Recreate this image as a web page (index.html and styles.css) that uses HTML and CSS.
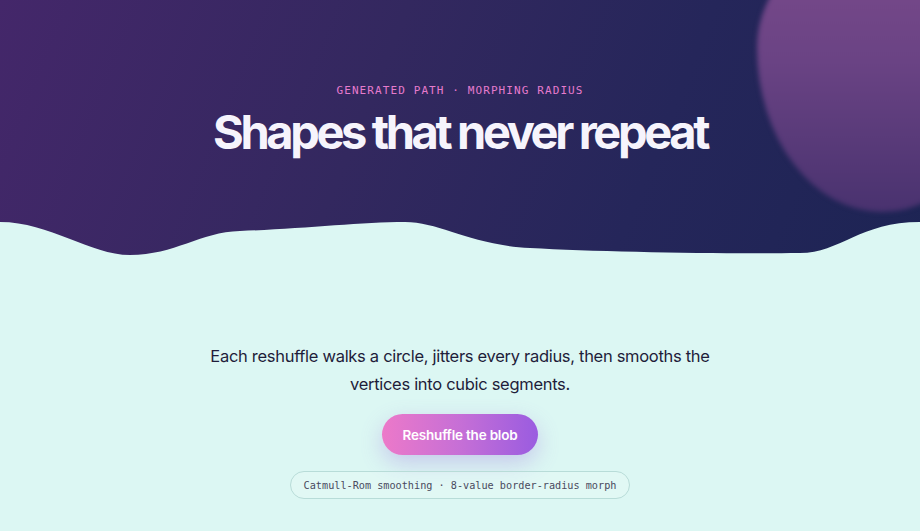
FILE: index.html
```html
<!DOCTYPE html>
<html lang="en">
<head>
<meta charset="utf-8">
<title>Shapes that never repeat</title>
<link rel="stylesheet" href="styles.css">
</head>
<body>
<header class="hero">
  <div class="blob"></div>
  <p class="eyebrow">GENERATED PATH · MORPHING RADIUS</p>
  <h1 class="title">Shapes that never repeat</h1>
  <svg class="wave" viewBox="0 0 920 42" preserveAspectRatio="none" aria-hidden="true">
    <path d="M0,8 C50,8 90,41 130,41 C175,41 200,18 240,17 C300,15 360,8 405,8 C440,8 470,31 530,34 C600,38 720,40 800,39 C840,39 860,8 920,8 L920,42 L0,42 Z" fill="#dcf7f3"/>
  </svg>
</header>
<main class="content">
  <p class="lead">Each reshuffle walks a circle, jitters every radius, then smooths the vertices into cubic segments.</p>
  <button class="btn" type="button">Reshuffle the blob</button>
  <div class="chip">Catmull-Rom smoothing · 8-value border-radius morph</div>
</main>
</body>
</html>
```

FILE: styles.css
```css
* { box-sizing: border-box; }
html, body { margin: 0; padding: 0; }
body {
  background: #dcf7f3;
  font-family: Inter, "Noto Sans", sans-serif;
  width: 920px;
  height: 531px;
  overflow: hidden;
}
.hero {
  position: relative;
  height: 256px;
  overflow: hidden;
  background: linear-gradient(112deg, #44276a 0%, #33285f 40%, #25265a 70%, #1d2454 100%);
  display: flex;
  flex-direction: column;
  align-items: center;
  padding-top: 83px;
}
.blob {
  position: absolute;
  left: 757px;
  top: -62px;
  width: 250px;
  height: 274px;
  border-radius: 46% 54% 50% 50% / 40% 42% 58% 60%;
  background: linear-gradient(180deg, #7c4b8c 0%, #6a4384 45%, #49326f 100%);
  filter: blur(2.5px);
}
.eyebrow {
  position: relative;
  margin: 0;
  font-family: "DejaVu Sans Mono", monospace;
  font-size: 11px;
  line-height: 16px;
  letter-spacing: 0.1em;
  color: #e67bcd;
}
.title {
  position: relative;
  margin: 5px 0 0;
  font-family: Inter, sans-serif;
  font-weight: 700;
  font-size: 47px;
  line-height: 56px;
  letter-spacing: -0.072em;
  color: #f6f4fc;
}
.wave {
  position: absolute;
  left: 0;
  bottom: 0;
  width: 920px;
  height: 42px;
  display: block;
}
.content {
  display: flex;
  flex-direction: column;
  align-items: center;
  padding-top: 86px;
}
.lead {
  margin: 0;
  width: 510px;
  text-align: center;
  font-size: 16.5px;
  line-height: 28px;
  letter-spacing: -0.3px;
  color: #1f1d3a;
}
.btn {
  margin-top: 16px;
  width: 156px;
  height: 41px;
  border: 0;
  border-radius: 999px;
  background: linear-gradient(90deg, #ec79c9 0%, #c66fd6 50%, #9a5ce0 100%);
  color: #ffffff;
  font-family: Inter, sans-serif;
  font-weight: 600;
  font-size: 13.5px;
  letter-spacing: -0.2px;
  box-shadow: 0 8px 22px rgba(150, 95, 220, 0.3);
}
.chip {
  margin-top: 16px;
  height: 28px;
  padding: 0 13px;
  display: flex;
  align-items: center;
  border: 1px solid #b8dcd8;
  border-radius: 999px;
  background: rgba(255, 255, 255, 0.15);
  font-family: "DejaVu Sans Mono", monospace;
  font-size: 10.2px;
  color: #4a4a5e;
}
```
